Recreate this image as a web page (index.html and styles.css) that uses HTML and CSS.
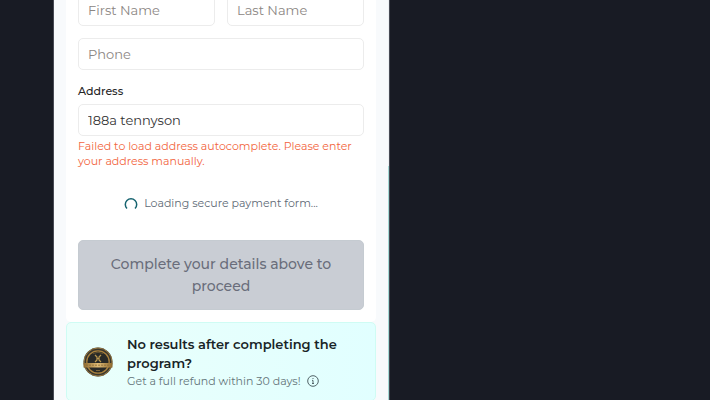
FILE: index.html
```
<!DOCTYPE html>
<html lang="en">
<head>
<meta charset="utf-8">
<meta name="viewport" content="width=device-width, initial-scale=1">
<title>Checkout</title>
<link rel="stylesheet" href="styles.css">
</head>
<body>
<main class="panel">
  <form class="card">
    <div class="row">
      <input class="field" type="text" placeholder="First Name" aria-label="First Name">
      <input class="field" type="text" placeholder="Last Name" aria-label="Last Name">
    </div>
    <input class="field phone" type="tel" placeholder="Phone" aria-label="Phone">
    <label class="label" for="address">Address</label>
    <input class="field" id="address" type="text" value="188a tennyson">
    <p class="error">Failed to load address autocomplete. Please enter your address manually.</p>
    <div class="loading">
      <svg class="spinner" viewBox="0 0 14 14" aria-hidden="true"><path d="M3 11.5A5.7 5.7 0 1 1 11 11.5"/></svg>
      <span>Loading secure payment form...</span>
    </div>
    <button class="submit" type="submit" disabled>Complete your details above to proceed</button>
  </form>
  <section class="guarantee">
    <svg class="seal" viewBox="0 0 30 30" aria-hidden="true">
      <defs>
        <linearGradient id="gold" x1="0" y1="0" x2="1" y2="0">
          <stop offset="0" stop-color="#8d692e"/><stop offset=".5" stop-color="#e0bd78"/><stop offset="1" stop-color="#8d692e"/>
        </linearGradient>
      </defs>
      <circle cx="15" cy="15" r="14.5" fill="#3b382f"/>
      <circle cx="15" cy="15" r="14" fill="none" stroke="#9a7a42" stroke-width="1"/>
      <circle cx="15" cy="15" r="11.2" fill="#292a27" stroke="#a9813d" stroke-width="1.3"/>
      <path d="M12 8l2 2v3l-2 2M18 8l-2 2v3l2 2M14 11.5h2" fill="none" stroke="#b9974f" stroke-width="1.2"/>
      <path d="M10 6.5q5-2.5 10 0" fill="none" stroke="#715d35" stroke-width=".8"/>
      <path d="M.5 16h29v4.5H.5z" fill="url(#gold)"/>
      <path d="M3 18.2h24" stroke="#8b6b36" stroke-width=".8" stroke-dasharray="2 1"/>
      <path d="M13 23.5h4" stroke="#92743d" stroke-width=".8"/>
    </svg>
    <div class="copy">
      <h2 class="title">No results after completing the program?</h2>
      <p class="note">Get a full refund within 30 days!
        <svg class="info" viewBox="0 0 12 12" aria-hidden="true"><circle cx="6" cy="6" r="5.3"/><path d="M6 5.4v3M5 5.4h1M5 8.5h2M6 3v1"/></svg>
      </p>
    </div>
  </section>
</main>
</body>
</html>
```
FILE: styles.css
```
* { box-sizing: border-box; }
html { height: 100%; }
body {
  margin: 0;
  height: 100%;
  overflow: hidden;
  background: #181b24;
  font-family: Montserrat, Inter, sans-serif;
  font-size: 12px;
  line-height: 15px;
}
.panel {
  width: 100%;
  max-width: 335px;
  min-height: 100%;
  margin: -6px 0 0 54px;
  padding: 0 12px;
  background: #f8fafc;
  border-right: 1px solid;
  border-image: linear-gradient(#eceff2 172px, #a5dad7 172px) 1;
  box-shadow: 0 0 0 1px #484a54;
}
.card {
  padding: 0 12px 12px;
  background: #fff;
  border-radius: 0 0 5px 5px;
}
.row {
  display: grid;
  grid-template-columns: 1fr 1fr;
  gap: 12px;
}
.field {
  display: block;
  width: 100%;
  height: 32px;
  padding: 0 9px;
  border: 1px solid #ececec;
  border-radius: 5px;
  background: #fff;
  color: #333;
  font: inherit;
  font-size: 13px;
}
.field::placeholder { color: #8b8683; opacity: 1; }
.phone { margin-top: 12px; }
.label {
  display: block;
  margin: 14px 0 5px;
  color: #252525;
  font-size: 11px;
  font-weight: 500;
}
.error {
  margin: 3px 0 0;
  color: #f26540;
  font-size: 11px;
}
.loading {
  display: flex;
  align-items: center;
  justify-content: center;
  gap: 6px;
  margin: 27px 0 29px;
  color: #606a76;
  font-size: 11px;
}
.spinner {
  width: 14px;
  height: 14px;
  fill: none;
  stroke: #176470;
  stroke-width: 1.5;
}
.submit {
  display: block;
  width: 100%;
  padding: 12px 24px;
  border: 1px solid #c5cbd1;
  border-radius: 5px;
  background: #c9cdd4;
  color: #6a6d7b;
  font: inherit;
  font-size: 14px;
  font-weight: 500;
  line-height: 22px;
}
.guarantee {
  display: flex;
  align-items: center;
  gap: 14px;
  padding: 12px 16px 11px;
  border: 1px solid #cffcf4;
  border-radius: 5px;
  background: linear-gradient(90deg, #eafffb, #e1ffff);
}
.seal {
  flex: none;
  width: 30px;
  height: 30px;
}
.title {
  margin: 0;
  color: #182426;
  font-size: 13px;
  font-weight: 600;
  line-height: 19px;
}
.note {
  display: flex;
  align-items: center;
  gap: 6px;
  margin: 0;
  color: #64757a;
  font-size: 11px;
  line-height: 16px;
}
.info {
  width: 12px;
  height: 12px;
  fill: none;
  stroke: #526468;
  stroke-width: 1;
}
```
